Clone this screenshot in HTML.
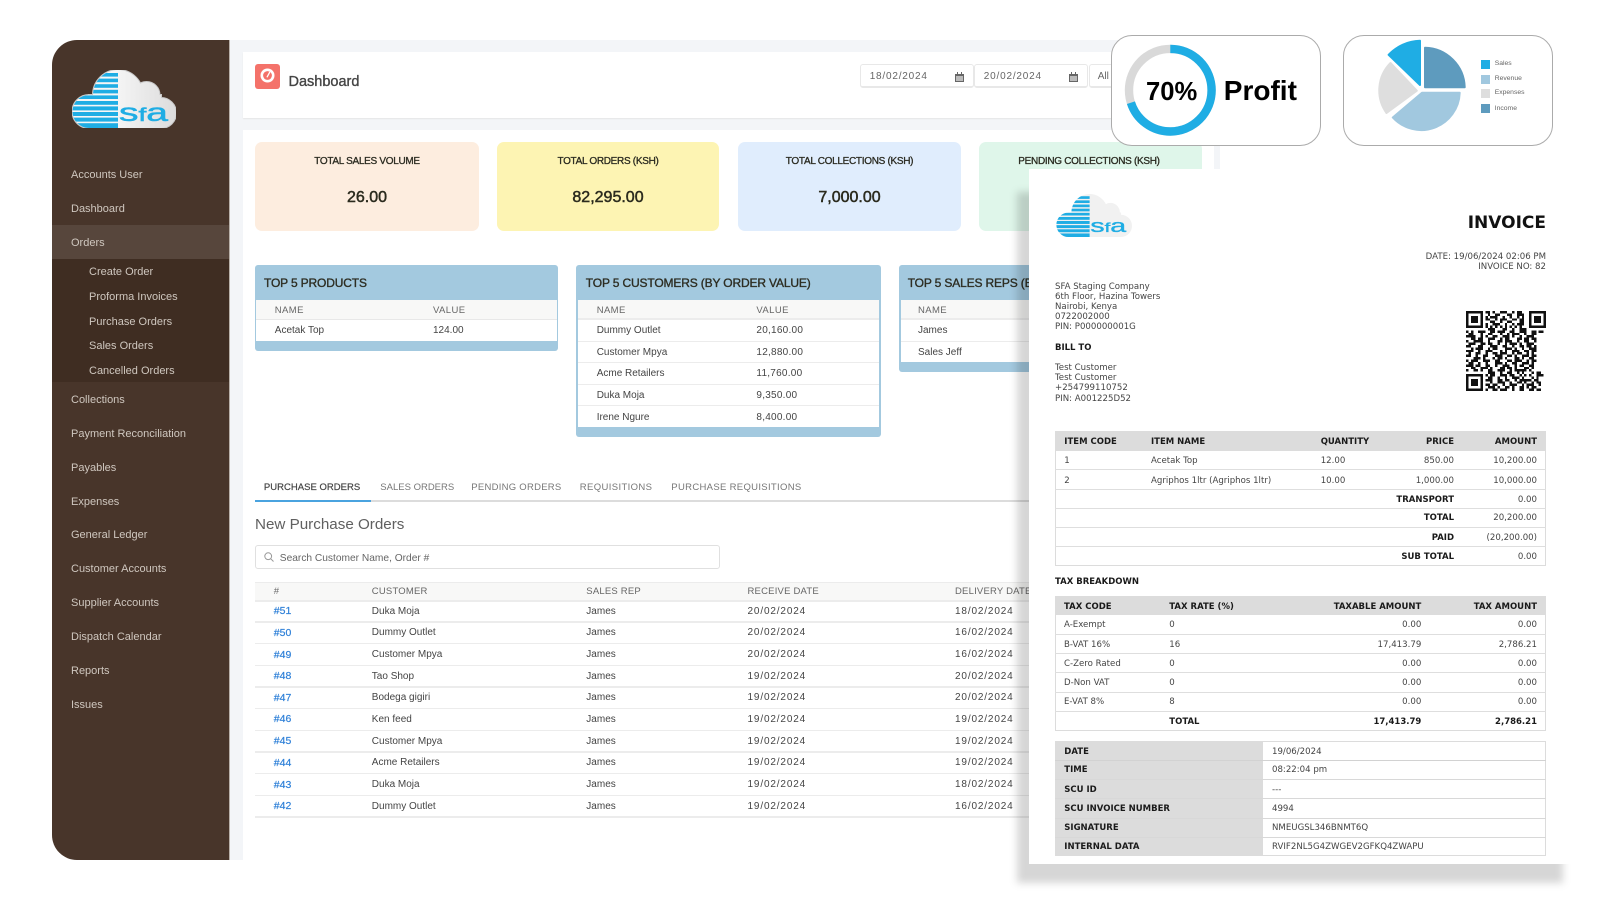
<!DOCTYPE html>
<html><head><meta charset="utf-8"><title>SFA Dashboard</title>
<style>
html,body{margin:0;padding:0;background:#fff}
body{position:relative;width:1600px;height:900px;overflow:hidden;font-family:"Liberation Sans",sans-serif;color:#444}
.b{position:absolute}
.t{position:absolute;white-space:nowrap;line-height:0;margin-top:1px}
.n{font-size:11px;color:#cfc7bf;left:71px}
.s{font-size:11px;color:#cfc7bf;left:89px}
.st{font-size:10px;color:#2a2a20;-webkit-text-stroke:.3px #2a2a20;top:161px;text-align:center;width:224px;letter-spacing:-.3px}
.sv{font-size:16px;color:#2b2b1e;-webkit-text-stroke:.5px #2b2b1e;top:196.5px;text-align:center;width:224px}
.card{position:absolute;top:142px;height:89px;width:223.5px;border-radius:7px}
.panel{position:absolute;background:#a3c9df;border-radius:3px;top:265px;overflow:hidden}
.ph{font-size:12px;color:#2d2d22;-webkit-text-stroke:.35px #2d2d22;top:282px;letter-spacing:-.15px}
.th{font-size:9.5px;color:#666;letter-spacing:.4px}
.th2{font-size:9.5px;color:#666;letter-spacing:.2px}
.td{font-size:10px;color:#444}
.dt{letter-spacing:.85px}
.ln{position:absolute;height:1.5px;background:#ececec}
.tab{font-size:9.5px;color:#777;top:486.7px}
.a{font-size:10.5px;color:#2f80d8;left:273.8px;-webkit-text-stroke:.2px #2f80d8}
.i{position:absolute;white-space:nowrap;line-height:0;margin-top:1px;font-family:"DejaVu Sans",sans-serif;font-size:8.6px;color:#444}
.ib{position:absolute;white-space:nowrap;line-height:0;margin-top:1px;font-family:"DejaVu Sans",sans-serif;font-size:8.5px;font-weight:700;color:#1a1a1a}
.r{transform:translateX(-100%)}
.g{position:absolute;background:#dcdcdc}
.l{position:absolute;height:1px;background:#dedede}
.bx{position:absolute;border:1px solid #dedede;box-sizing:border-box}
.pop{position:absolute;top:35px;height:111px;background:#fff;border:1px solid #ababab;border-radius:21px;box-sizing:border-box}
.lg{position:absolute;font-size:6.8px;color:#666;line-height:0;white-space:nowrap;left:1494.7px;margin-top:1px}
.sq{position:absolute;left:1481px;width:9px;height:9px;margin-top:1px}
</style></head><body>

<!-- main background -->
<div class="b" style="left:229px;top:40px;width:991px;height:820px;background:#f3f5f8"></div>
<div class="b" style="left:243px;top:52px;width:971px;height:66px;background:#fff;box-shadow:0 1px 1px #e6e6e6"></div>
<div class="b" style="left:243px;top:130px;width:971px;height:730px;background:#fff"></div>

<!-- sidebar -->
<div class="b" style="left:52px;top:40px;width:177.5px;height:820px;background:#48352a;border-radius:25px 0 0 25px;border-right:1px solid #b9b1aa;box-sizing:border-box"></div>
<div class="b" style="left:52px;top:224.7px;width:176.5px;height:34.6px;background:#57463c"></div>
<div class="b" style="left:52px;top:259.3px;width:176.5px;height:122.4px;background:#3f2d22"></div>

<svg class="b" style="left:72px;top:70px" width="104" height="58" viewBox="0 0 104 58">
<defs><clipPath id="c1"><circle cx="46" cy="25" r="25"/><circle cx="17" cy="41.5" r="16.5"/><circle cx="74.5" cy="25" r="13"/><circle cx="89" cy="43" r="15"/><rect x="17" y="25" width="72" height="33"/></clipPath>
<linearGradient id="g1" x1="0" x2="1" y1="0" y2="0"><stop offset=".4" stop-color="#f6f6f6"/><stop offset="1" stop-color="#dcdcdc"/></linearGradient></defs>
<g fill="#c8c8c8" stroke="#c8c8c8" stroke-width="2"><circle cx="46" cy="25" r="25"/><circle cx="17" cy="41.5" r="16.5"/><circle cx="74.5" cy="25" r="13"/><circle cx="89" cy="43" r="15"/><rect x="17" y="25" width="72" height="33"/></g>
<g clip-path="url(#c1)"><rect width="104" height="58" fill="url(#g1)"/>
<g fill="#1fade4"><rect y="3" width="46" height="3.6"/><rect y="8.6" width="46" height="3.6"/><rect y="14.2" width="46" height="3.6"/><rect y="19.8" width="46" height="3.6"/><rect y="25.4" width="46" height="3.6"/><rect y="31" width="46" height="3.8"/><rect y="36.4" width="46" height="4"/><rect y="42" width="46" height="4"/><rect y="47.6" width="46" height="4"/><rect y="53.2" width="46" height="4.8"/></g></g>
<text x="47" y="51" font-size="25" textLength="49" lengthAdjust="spacingAndGlyphs" fill="#1fade4" stroke="#1fade4" stroke-width=".5" font-family="Liberation Sans">s<tspan font-size="18">f</tspan>a</text>
</svg>

<div class="t n" style="top:174px">Accounts User</div>
<div class="t n" style="top:208px">Dashboard</div>
<div class="t n" style="top:241.8px">Orders</div>
<div class="t s" style="top:271.4px">Create Order</div>
<div class="t s" style="top:296px">Proforma Invoices</div>
<div class="t s" style="top:321px">Purchase Orders</div>
<div class="t s" style="top:345.4px">Sales Orders</div>
<div class="t s" style="top:370.4px">Cancelled Orders</div>
<div class="t n" style="top:399px">Collections</div>
<div class="t n" style="top:433px">Payment Reconciliation</div>
<div class="t n" style="top:467.3px">Payables</div>
<div class="t n" style="top:501px">Expenses</div>
<div class="t n" style="top:534px">General Ledger</div>
<div class="t n" style="top:568.4px">Customer Accounts</div>
<div class="t n" style="top:602px">Supplier Accounts</div>
<div class="t n" style="top:636.2px">Dispatch Calendar</div>
<div class="t n" style="top:670.4px">Reports</div>
<div class="t n" style="top:704px">Issues</div>

<!-- header -->
<svg class="b" style="left:255px;top:63.5px" width="25" height="25" viewBox="0 0 25 25"><rect width="25" height="25" rx="3" fill="#f4726a"/><circle cx="12.5" cy="11.5" r="7" fill="#fff"/><circle cx="12.5" cy="11.5" r="4.4" fill="#f4726a"/><path d="M14.6 8.4L12.2 12.8" stroke="#fff" stroke-width="1.3" stroke-linecap="round"/></svg>
<div class="t" style="left:288.5px;top:81px;font-size:14.5px;color:#444;-webkit-text-stroke:.35px #444">Dashboard</div>

<div class="bx" style="left:860px;top:64px;width:113.5px;height:24px;border-radius:3px;border-color:#e8e8e8;border-bottom-width:2px"></div>
<div class="bx" style="left:974px;top:64px;width:113.5px;height:24px;border-radius:3px;border-color:#e8e8e8;border-bottom-width:2px"></div>
<div class="bx" style="left:1089px;top:64px;width:60px;height:24px;border-radius:3px;border-color:#e8e8e8;border-bottom-width:2px"></div>
<div class="t" style="left:869.7px;top:75.7px;font-size:10px;letter-spacing:.8px;color:#666">18/02/2024</div>
<div class="t" style="left:983.8px;top:75.7px;font-size:10px;letter-spacing:.8px;color:#666">20/02/2024</div>
<div class="t" style="left:1097.7px;top:75.7px;font-size:10px;color:#666">All</div>
<svg class="b" style="left:955px;top:72px" width="9" height="10" viewBox="0 0 9 10"><path d="M0 2h9v8H0z" fill="#666"/><path d="M2 0h1v2H2zM6 0h1v2H6z" fill="#666"/><path d="M1 4h7v5H1z" fill="#bbb"/></svg>
<svg class="b" style="left:1068.5px;top:72px" width="9" height="10" viewBox="0 0 9 10"><path d="M0 2h9v8H0z" fill="#666"/><path d="M2 0h1v2H2zM6 0h1v2H6z" fill="#666"/><path d="M1 4h7v5H1z" fill="#bbb"/></svg>

<!-- stat cards -->
<div class="card" style="left:255px;background:#fdeddf"></div>
<div class="card" style="left:497px;width:222px;background:#fdf4b3"></div>
<div class="card" style="left:737.5px;background:#e0edfd"></div>
<div class="card" style="left:979px;width:223px;background:#dff6ea"></div>
<div class="t st" style="left:255px">TOTAL SALES VOLUME</div>
<div class="t sv" style="left:255px">26.00</div>
<div class="t st" style="left:496px">TOTAL ORDERS (KSH)</div>
<div class="t sv" style="left:496px">82,295.00</div>
<div class="t st" style="left:737.5px">TOTAL COLLECTIONS (KSH)</div>
<div class="t sv" style="left:737.5px">7,000.00</div>
<div class="t st" style="left:977px">PENDING COLLECTIONS (KSH)</div>

<!-- panels -->
<div class="panel" style="left:255px;width:303.4px;height:85.7px"></div>
<div class="b" style="left:256.4px;top:300px;width:300.6px;height:18.7px;background:#f8f8f7"></div>
<div class="b" style="left:256.4px;top:318.7px;width:300.6px;height:22px;background:#fff;border-top:1px solid #e8e8e8;box-sizing:border-box"></div>
<div class="t ph" style="left:264px">TOP 5 PRODUCTS</div>
<div class="t th" style="left:274.8px;top:310px">NAME</div><div class="t th" style="left:433px;top:310px">VALUE</div>
<div class="t td" style="left:274.8px;top:330px">Acetak Top</div><div class="t td" style="left:433px;top:330px">124.00</div>

<div class="panel" style="left:576.3px;width:304.5px;height:172.3px"></div>
<div class="b" style="left:578px;top:300px;width:301.4px;height:18.7px;background:#f8f8f7"></div>
<div class="b" style="left:578px;top:318.7px;width:301.4px;height:108.6px;background:#fff"></div>
<div class="ln" style="left:578px;width:301.4px;top:318px"></div>
<div class="ln" style="left:578px;width:301.4px;top:340.5px"></div>
<div class="ln" style="left:578px;width:301.4px;top:361.8px"></div>
<div class="ln" style="left:578px;width:301.4px;top:383.5px"></div>
<div class="ln" style="left:578px;width:301.4px;top:404.8px"></div>
<div class="t ph" style="left:585.8px">TOP 5 CUSTOMERS (BY ORDER VALUE)</div>
<div class="t th" style="left:596.7px;top:310px">NAME</div><div class="t th" style="left:756.4px;top:310px">VALUE</div>
<div class="t td" style="left:596.7px;top:330px">Dummy Outlet</div><div class="t td dt" style="left:756.4px;top:330px;letter-spacing:.25px">20,160.00</div>
<div class="t td" style="left:596.7px;top:351.7px">Customer Mpya</div><div class="t td dt" style="left:756.4px;top:351.7px;letter-spacing:.25px">12,880.00</div>
<div class="t td" style="left:596.7px;top:373px">Acme Retailers</div><div class="t td dt" style="left:756.4px;top:373px;letter-spacing:.25px">11,760.00</div>
<div class="t td" style="left:596.7px;top:394.5px">Duka Moja</div><div class="t td dt" style="left:756.4px;top:394.5px;letter-spacing:.25px">9,350.00</div>
<div class="t td" style="left:596.7px;top:416.8px">Irene Ngure</div><div class="t td dt" style="left:756.4px;top:416.8px;letter-spacing:.25px">8,400.00</div>

<div class="panel" style="left:899px;width:304px;height:106.7px"></div>
<div class="b" style="left:900.5px;top:300px;width:301px;height:18.7px;background:#f8f8f7"></div>
<div class="b" style="left:900.5px;top:318.7px;width:301px;height:43.5px;background:#fff"></div>
<div class="ln" style="left:900.5px;width:301px;top:318px"></div>
<div class="ln" style="left:900.5px;width:301px;top:340.5px"></div>
<div class="t ph" style="left:907.7px">TOP 5 SALES REPS (BY ORDER VALUE)</div>
<div class="t th" style="left:918px;top:310px">NAME</div>
<div class="t td" style="left:918px;top:330px">James</div>
<div class="t td" style="left:918px;top:351.7px">Sales Jeff</div>

<!-- tabs -->
<div class="t tab" style="left:263.9px;color:#444;-webkit-text-stroke:.2px #444;letter-spacing:.02px">PURCHASE ORDERS</div>
<div class="t tab" style="left:380.3px;letter-spacing:0">SALES ORDERS</div>
<div class="t tab" style="left:471.3px;letter-spacing:.26px">PENDING ORDERS</div>
<div class="t tab" style="left:579.8px;letter-spacing:.37px">REQUISITIONS</div>
<div class="t tab" style="left:671.3px;letter-spacing:.32px">PURCHASE REQUISITIONS</div>
<div class="b" style="left:255px;top:500px;width:959px;height:1.5px;background:#dcdcdc"></div>
<div class="b" style="left:255px;top:500px;width:116px;height:1.5px;background:#4aa3df"></div>
<div class="t" style="left:255px;top:524px;font-size:15.2px;color:#606060">New Purchase Orders</div>

<div class="bx" style="left:255px;top:545px;width:464.6px;height:24.3px;border-radius:3px;border-color:#e0e0e0"></div>
<svg class="b" style="left:264px;top:552px" width="10" height="10" viewBox="0 0 10 10"><circle cx="4.2" cy="4.2" r="3.4" fill="none" stroke="#999" stroke-width="1"/><path d="M6.8 6.8L9.5 9.5" stroke="#999" stroke-width="1"/></svg>
<div class="t" style="left:279.8px;top:557.6px;font-size:10.2px;color:#666">Search Customer Name, Order #</div>

<!-- orders table -->
<div class="b" style="left:255px;top:581.7px;width:959px;height:18.3px;background:#f8f8f7;border-top:1px solid #ececec;box-sizing:border-box"></div>
<div class="t th2" style="left:273.8px;top:591.3px">#</div>
<div class="t th2" style="left:371.8px;top:591.3px">CUSTOMER</div>
<div class="t th2" style="left:586.3px;top:591.3px">SALES REP</div>
<div class="t th2" style="left:747.5px;top:591.3px">RECEIVE DATE</div>
<div class="t th2" style="left:955px;top:591.3px">DELIVERY DATE</div>
<div class="ln" style="left:255px;width:959px;top:600px"></div>
<div class="ln" style="left:255px;width:959px;top:621.2px"></div>
<div class="ln" style="left:255px;width:959px;top:642.9px"></div>
<div class="ln" style="left:255px;width:959px;top:664.6px"></div>
<div class="ln" style="left:255px;width:959px;top:686.2px"></div>
<div class="ln" style="left:255px;width:959px;top:707.9px"></div>
<div class="ln" style="left:255px;width:959px;top:729.6px"></div>
<div class="ln" style="left:255px;width:959px;top:751.2px"></div>
<div class="ln" style="left:255px;width:959px;top:772.9px"></div>
<div class="ln" style="left:255px;width:959px;top:794.6px"></div>
<div class="ln" style="left:255px;width:959px;top:816.2px"></div>

<div class="t a" style="top:610.2px">#51</div><div class="t td" style="left:371.8px;top:610.7px">Duka Moja</div><div class="t td" style="left:586.3px;top:610.7px">James</div><div class="t td dt" style="left:747.5px;top:610.7px">20/02/2024</div><div class="t td dt" style="left:955px;top:610.7px">18/02/2024</div>
<div class="t a" style="top:631.6px">#50</div><div class="t td" style="left:371.8px;top:632.1px">Dummy Outlet</div><div class="t td" style="left:586.3px;top:632.1px">James</div><div class="t td dt" style="left:747.5px;top:632.1px">20/02/2024</div><div class="t td dt" style="left:955px;top:632.1px">16/02/2024</div>
<div class="t a" style="top:653.5px">#49</div><div class="t td" style="left:371.8px;top:654px">Customer Mpya</div><div class="t td" style="left:586.3px;top:654px">James</div><div class="t td dt" style="left:747.5px;top:654px">20/02/2024</div><div class="t td dt" style="left:955px;top:654px">16/02/2024</div>
<div class="t a" style="top:675px">#48</div><div class="t td" style="left:371.8px;top:675.5px">Tao Shop</div><div class="t td" style="left:586.3px;top:675.5px">James</div><div class="t td dt" style="left:747.5px;top:675.5px">19/02/2024</div><div class="t td dt" style="left:955px;top:675.5px">20/02/2024</div>
<div class="t a" style="top:696.9px">#47</div><div class="t td" style="left:371.8px;top:697.4px">Bodega gigiri</div><div class="t td" style="left:586.3px;top:697.4px">James</div><div class="t td dt" style="left:747.5px;top:697.4px">19/02/2024</div><div class="t td dt" style="left:955px;top:697.4px">20/02/2024</div>
<div class="t a" style="top:718.4px">#46</div><div class="t td" style="left:371.8px;top:718.9px">Ken feed</div><div class="t td" style="left:586.3px;top:718.9px">James</div><div class="t td dt" style="left:747.5px;top:718.9px">19/02/2024</div><div class="t td dt" style="left:955px;top:718.9px">19/02/2024</div>
<div class="t a" style="top:740.3px">#45</div><div class="t td" style="left:371.8px;top:740.8px">Customer Mpya</div><div class="t td" style="left:586.3px;top:740.8px">James</div><div class="t td dt" style="left:747.5px;top:740.8px">19/02/2024</div><div class="t td dt" style="left:955px;top:740.8px">19/02/2024</div>
<div class="t a" style="top:761.7px">#44</div><div class="t td" style="left:371.8px;top:762.2px">Acme Retailers</div><div class="t td" style="left:586.3px;top:762.2px">James</div><div class="t td dt" style="left:747.5px;top:762.2px">19/02/2024</div><div class="t td dt" style="left:955px;top:762.2px">19/02/2024</div>
<div class="t a" style="top:783.7px">#43</div><div class="t td" style="left:371.8px;top:784.2px">Duka Moja</div><div class="t td" style="left:586.3px;top:784.2px">James</div><div class="t td dt" style="left:747.5px;top:784.2px">19/02/2024</div><div class="t td dt" style="left:955px;top:784.2px">18/02/2024</div>
<div class="t a" style="top:805.1px">#42</div><div class="t td" style="left:371.8px;top:805.6px">Dummy Outlet</div><div class="t td" style="left:586.3px;top:805.6px">James</div><div class="t td dt" style="left:747.5px;top:805.6px">19/02/2024</div><div class="t td dt" style="left:955px;top:805.6px">16/02/2024</div>

<!-- invoice -->
<div class="b" style="left:1017px;top:192px;width:546px;height:691px;background:rgba(0,0,0,.16);filter:blur(4px)"></div>
<div class="b" style="left:1029px;top:168.5px;width:560px;height:695px;background:#fff"></div>

<svg class="b" style="left:1056px;top:194px" width="76" height="43" viewBox="0 0 104 58" preserveAspectRatio="none">
<defs><clipPath id="c2"><circle cx="46" cy="25" r="25"/><circle cx="17" cy="41.5" r="16.5"/><circle cx="74.5" cy="25" r="13"/><circle cx="89" cy="43" r="15"/><rect x="17" y="25" width="72" height="33"/></clipPath></defs>
<g clip-path="url(#c2)"><rect width="104" height="58" fill="#f1f1f1"/>
<g fill="#1fade4"><rect y="3" width="46" height="3.6"/><rect y="8.6" width="46" height="3.6"/><rect y="14.2" width="46" height="3.6"/><rect y="19.8" width="46" height="3.6"/><rect y="25.4" width="46" height="3.6"/><rect y="31" width="46" height="3.8"/><rect y="36.4" width="46" height="4"/><rect y="42" width="46" height="4"/><rect y="47.6" width="46" height="4"/><rect y="53.2" width="46" height="4.8"/></g></g>
<text x="47" y="51" font-size="25" textLength="49" lengthAdjust="spacingAndGlyphs" fill="#1fade4" stroke="#1fade4" stroke-width=".5" font-family="Liberation Sans">s<tspan font-size="18">f</tspan>a</text>
</svg>

<div class="t r" style="left:1546px;top:221.5px;font-family:'DejaVu Sans',sans-serif;font-weight:700;font-size:17px;color:#111">INVOICE</div>
<div class="i r" style="left:1546px;top:256px">DATE: 19/06/2024 02:06 PM</div>
<div class="i r" style="left:1546px;top:266px">INVOICE NO: 82</div>

<div class="i" style="left:1055px;top:286px">SFA Staging Company</div>
<div class="i" style="left:1055px;top:296px">6th Floor, Hazina Towers</div>
<div class="i" style="left:1055px;top:306px">Nairobi, Kenya</div>
<div class="i" style="left:1055px;top:316px">0722002000</div>
<div class="i" style="left:1055px;top:326px">PIN: P000000001G</div>
<div class="ib" style="left:1055px;top:346.7px">BILL TO</div>
<div class="i" style="left:1055px;top:367.3px">Test Customer</div>
<div class="i" style="left:1055px;top:377px">Test Customer</div>
<div class="i" style="left:1055px;top:387.3px">+254799110752</div>
<div class="i" style="left:1055px;top:397.7px">PIN: A001225D52</div>

<svg class="b" style="left:1466px;top:311px" width="80" height="80" viewBox="0 0 33 33" shape-rendering="crispEdges">
<path fill="#111" fill-rule="evenodd" d="M0 0h7v7H0zM1 1v5h5V1zM2 2h3v3H2zM26 0h7v7h-7zM27 1v5h5V1zM28 2h3v3h-3zM0 26h7v7H0zM1 27v5h5v-5zM2 28h3v3H2z"/>
<path stroke="#111" stroke-width="1" fill="none" d="M8 .5h2m1 0h1m2 0h3m2 0h1m1 0h2M9 1.5h1m2 0h2m3 0h2m2 0h3M8 2.5h1m1 0h3m2 0h1m2 0h1m2 0h1m1 0h1M8 3.5h2m2 0h1m1 0h3m2 0h2m1 0h2M10 4.5h2m2 0h1m2 0h2m3 0h2M8 5.5h1m2 0h3m2 0h1m2 0h1m1 0h3M8 6.5h1m1 0h1m1 0h1m1 0h1m1 0h1m1 0h1m1 0h1m1 0h1M9 7.5h3m3 0h2m2 0h1m2 0h3M0 8.5h1m1 0h1m2 0h3m2 0h2m1 0h3m2 0h2m2 0h3m2 0h2m1 0h2M1 9.5h2m3 0h1m2 0h2m3 0h1m2 0h1m1 0h3m2 0h1m2 0h2M0 10.5h4m2 0h1m1 0h1m2 0h2m2 0h3m1 0h1m2 0h1m2 0h3M2 11.5h2m1 0h2m2 0h3m2 0h1m1 0h2m3 0h2m1 0h2m1 0h2M0 12.5h1m2 0h4m2 0h1m3 0h2m1 0h3m2 0h1m2 0h2m2 0h1M1 13.5h3m2 0h2m1 0h2m2 0h1m2 0h1m1 0h3m1 0h1m2 0h3M0 14.5h2m3 0h2m3 0h3m2 0h2m2 0h1m2 0h2m1 0h2m1 0h1M2 15.5h1m1 0h3m2 0h1m1 0h2m3 0h3m1 0h1m2 0h1m2 0h3M0 16.5h3m2 0h1m2 0h3m3 0h1m1 0h1m2 0h3m2 0h2m1 0h2M1 17.5h1m2 0h2m2 0h1m2 0h2m1 0h3m2 0h1m1 0h2m2 0h1m1 0h1M0 18.5h2m2 0h1m2 0h2m3 0h3m2 0h2m1 0h1m2 0h3m1 0h2M3 19.5h3m1 0h1m3 0h1m1 0h2m1 0h1m3 0h2m1 0h1m2 0h2M0 20.5h1m1 0h3m2 0h3m2 0h2m3 0h2m1 0h3m2 0h1m1 0h2M1 21.5h2m2 0h1m2 0h1m3 0h3m1 0h1m2 0h2m2 0h3m1 0h1M0 22.5h3m1 0h2m2 0h2m2 0h1m2 0h3m2 0h1m1 0h2m2 0h2M2 23.5h2m2 0h3m1 0h1m3 0h2m1 0h2m1 0h1m3 0h2m1 0h1M0 24.5h1m2 0h2m1 0h1m2 0h2m2 0h3m2 0h1m1 0h5m1 0h1M9 25.5h3m2 0h1m2 0h2m2 0h1m1 0h1m3 0h1m1 0h2M8 26.5h1m1 0h2m2 0h3m1 0h2m2 0h1m1 0h1m1 0h1m2 0h3M9 27.5h2m2 0h1m2 0h1m2 0h3m1 0h1m3 0h1m1 0h1M8 28.5h3m2 0h2m1 0h2m2 0h1m1 0h5m1 0h2M10 29.5h1m2 0h3m2 0h1m2 0h2m1 0h1m2 0h1m1 0h2M8 30.5h2m1 0h2m2 0h1m2 0h3m2 0h1m1 0h3m2 0h1M9 31.5h3m1 0h1m2 0h2m1 0h1m2 0h2m1 0h1m1 0h2M8 32.5h1m2 0h2m1 0h3m2 0h1m2 0h2m2 0h2m1 0h2"/>
</svg>

<!-- items table -->
<div class="bx" style="left:1055px;top:431px;width:491.4px;height:135px;border-color:#dcdcdc;border-bottom-width:1.5px"></div>
<div class="g" style="left:1055px;top:431px;width:491.4px;height:19.7px"></div>
<div class="l" style="left:1055px;width:491.4px;top:469px"></div>
<div class="l" style="left:1055px;width:491.4px;top:488.5px"></div>
<div class="l" style="left:1055px;width:491.4px;top:508px"></div>
<div class="l" style="left:1055px;width:491.4px;top:527px"></div>
<div class="l" style="left:1055px;width:491.4px;top:546px"></div>
<div class="ib" style="left:1064.3px;top:441px">ITEM CODE</div><div class="ib" style="left:1151px;top:441px">ITEM NAME</div><div class="ib" style="left:1320.7px;top:441px">QUANTITY</div><div class="ib r" style="left:1454px;top:441px">PRICE</div><div class="ib r" style="left:1537px;top:441px">AMOUNT</div>
<div class="i" style="left:1064.3px;top:460px">1</div><div class="i" style="left:1151px;top:460px">Acetak Top</div><div class="i" style="left:1320.7px;top:460px">12.00</div><div class="i r" style="left:1454px;top:460px">850.00</div><div class="i r" style="left:1537px;top:460px">10,200.00</div>
<div class="i" style="left:1064.3px;top:479.7px">2</div><div class="i" style="left:1151px;top:479.7px">Agriphos 1ltr (Agriphos 1ltr)</div><div class="i" style="left:1320.7px;top:479.7px">10.00</div><div class="i r" style="left:1454px;top:479.7px">1,000.00</div><div class="i r" style="left:1537px;top:479.7px">10,000.00</div>
<div class="ib r" style="left:1454px;top:498.7px">TRANSPORT</div><div class="i r" style="left:1537px;top:498.7px">0.00</div>
<div class="ib r" style="left:1454px;top:517.3px">TOTAL</div><div class="i r" style="left:1537px;top:517.3px">20,200.00</div>
<div class="ib r" style="left:1454px;top:537px">PAID</div><div class="i r" style="left:1537px;top:537px">(20,200.00)</div>
<div class="ib r" style="left:1454px;top:555.7px">SUB TOTAL</div><div class="i r" style="left:1537px;top:555.7px">0.00</div>

<!-- tax table -->
<div class="ib" style="left:1055px;top:580.7px">TAX BREAKDOWN</div>
<div class="bx" style="left:1055px;top:595.7px;width:491.4px;height:135px;border-color:#dcdcdc;border-bottom-width:1.5px"></div>
<div class="g" style="left:1055px;top:595.7px;width:491.4px;height:19.6px"></div>
<div class="l" style="left:1055px;width:491.4px;top:633.5px"></div>
<div class="l" style="left:1055px;width:491.4px;top:653px"></div>
<div class="l" style="left:1055px;width:491.4px;top:672px"></div>
<div class="l" style="left:1055px;width:491.4px;top:691.5px"></div>
<div class="l" style="left:1055px;width:491.4px;top:710.5px"></div>
<div class="ib" style="left:1064px;top:605.7px">TAX CODE</div><div class="ib" style="left:1169.3px;top:605.7px">TAX RATE (%)</div><div class="ib r" style="left:1421.3px;top:605.7px">TAXABLE AMOUNT</div><div class="ib r" style="left:1537px;top:605.7px">TAX AMOUNT</div>
<div class="i" style="left:1064px;top:624.3px">A-Exempt</div><div class="i" style="left:1169.3px;top:624.3px">0</div><div class="i r" style="left:1421.3px;top:624.3px">0.00</div><div class="i r" style="left:1537px;top:624.3px">0.00</div>
<div class="i" style="left:1064px;top:644px">B-VAT 16%</div><div class="i" style="left:1169.3px;top:644px">16</div><div class="i r" style="left:1421.3px;top:644px">17,413.79</div><div class="i r" style="left:1537px;top:644px">2,786.21</div>
<div class="i" style="left:1064px;top:663.3px">C-Zero Rated</div><div class="i" style="left:1169.3px;top:663.3px">0</div><div class="i r" style="left:1421.3px;top:663.3px">0.00</div><div class="i r" style="left:1537px;top:663.3px">0.00</div>
<div class="i" style="left:1064px;top:682px">D-Non VAT</div><div class="i" style="left:1169.3px;top:682px">0</div><div class="i r" style="left:1421.3px;top:682px">0.00</div><div class="i r" style="left:1537px;top:682px">0.00</div>
<div class="i" style="left:1064px;top:701.3px">E-VAT 8%</div><div class="i" style="left:1169.3px;top:701.3px">8</div><div class="i r" style="left:1421.3px;top:701.3px">0.00</div><div class="i r" style="left:1537px;top:701.3px">0.00</div>
<div class="ib" style="left:1169.3px;top:720.7px">TOTAL</div><div class="ib r" style="left:1421.3px;top:720.7px">17,413.79</div><div class="ib r" style="left:1537px;top:720.7px">2,786.21</div>

<!-- meta table -->
<div class="bx" style="left:1055.4px;top:740.7px;width:491px;height:115.5px;border-color:#dcdcdc"></div>
<div class="g" style="left:1055.4px;top:740.7px;width:207.8px;height:115.5px"></div>
<div class="l" style="left:1055.4px;width:491px;top:760px;background:#d2d2d2"></div>
<div class="l" style="left:1055.4px;width:491px;top:779px;background:#d8d8d8"></div>
<div class="l" style="left:1055.4px;width:491px;top:798px;background:#d8d8d8"></div>
<div class="l" style="left:1055.4px;width:491px;top:817.5px;background:#d8d8d8"></div>
<div class="l" style="left:1055.4px;width:491px;top:836.5px;background:#d8d8d8"></div>
<div class="ib" style="left:1064.3px;top:750.7px">DATE</div><div class="i" style="left:1272px;top:750.7px">19/06/2024</div>
<div class="ib" style="left:1064.3px;top:769.3px">TIME</div><div class="i" style="left:1272px;top:769.3px">08:22:04 pm</div>
<div class="ib" style="left:1064.3px;top:789px">SCU ID</div><div class="i" style="left:1272px;top:789px">---</div>
<div class="ib" style="left:1064.3px;top:808.3px">SCU INVOICE NUMBER</div><div class="i" style="left:1272px;top:808.3px">4994</div>
<div class="ib" style="left:1064.3px;top:827px">SIGNATURE</div><div class="i" style="left:1272px;top:827px">NMEUGSL346BNMT6Q</div>
<div class="ib" style="left:1064.3px;top:846px">INTERNAL DATA</div><div class="i" style="left:1272px;top:846px">RVIF2NL5G4ZWGEV2GFKQ4ZWAPU</div>

<!-- profit card -->
<div class="pop" style="left:1111.3px;width:209.4px"></div>
<svg class="b" style="left:1120px;top:39.5px" width="100" height="100" viewBox="0 0 100 100">
<circle cx="50.3" cy="50.2" r="41.3" fill="none" stroke="#d9d9d9" stroke-width="8.4"/>
<circle cx="50.3" cy="50.2" r="41.3" fill="none" stroke="#1fade4" stroke-width="8.4" stroke-dasharray="181.6 259.5" transform="rotate(-90 50.3 50.2)"/>
</svg>
<div class="t" style="left:1146px;top:90.5px;font-size:25.6px;font-weight:700;color:#000">70%</div>
<div class="t" style="left:1223.8px;top:89.5px;font-size:28px;font-weight:700;color:#000">Profit</div>

<!-- pie card -->
<div class="pop" style="left:1343.3px;width:209.7px"></div>
<svg class="b" style="left:1370px;top:35px" width="100" height="105" viewBox="1370 35 100 105">
<g stroke-width="2" stroke-linejoin="round">
<path d="M1420 85L1388.6 54.8A45 45 0 0 1 1420 40.8Z" fill="#1fade4" stroke="#1fade4"/>
<path d="M1425 87.3V47.7A40.6 40.6 0 0 1 1464.7 87.3Z" fill="#5e9bbe" stroke="#5e9bbe"/>
<path d="M1422 92.8H1459.7A38.5 38.5 0 0 1 1392.8 117.5Z" fill="#a1c8df" stroke="#a1c8df"/>
<path d="M1416.8 90.7L1386.5 113A39 39 0 0 1 1390.5 63Z" fill="#dedede" stroke="#dedede"/>
</g></svg>
<div class="sq" style="top:58.5px;background:#1fade4"></div>
<div class="sq" style="top:73.5px;background:#a1c8df"></div>
<div class="sq" style="top:87.5px;background:#dedede"></div>
<div class="sq" style="top:102.5px;background:#5e9bbe"></div>
<div class="lg" style="top:62.7px">Sales</div>
<div class="lg" style="top:78.3px">Revenue</div>
<div class="lg" style="top:91.7px">Expenses</div>
<div class="lg" style="top:107.7px">Income</div>

</body></html>
